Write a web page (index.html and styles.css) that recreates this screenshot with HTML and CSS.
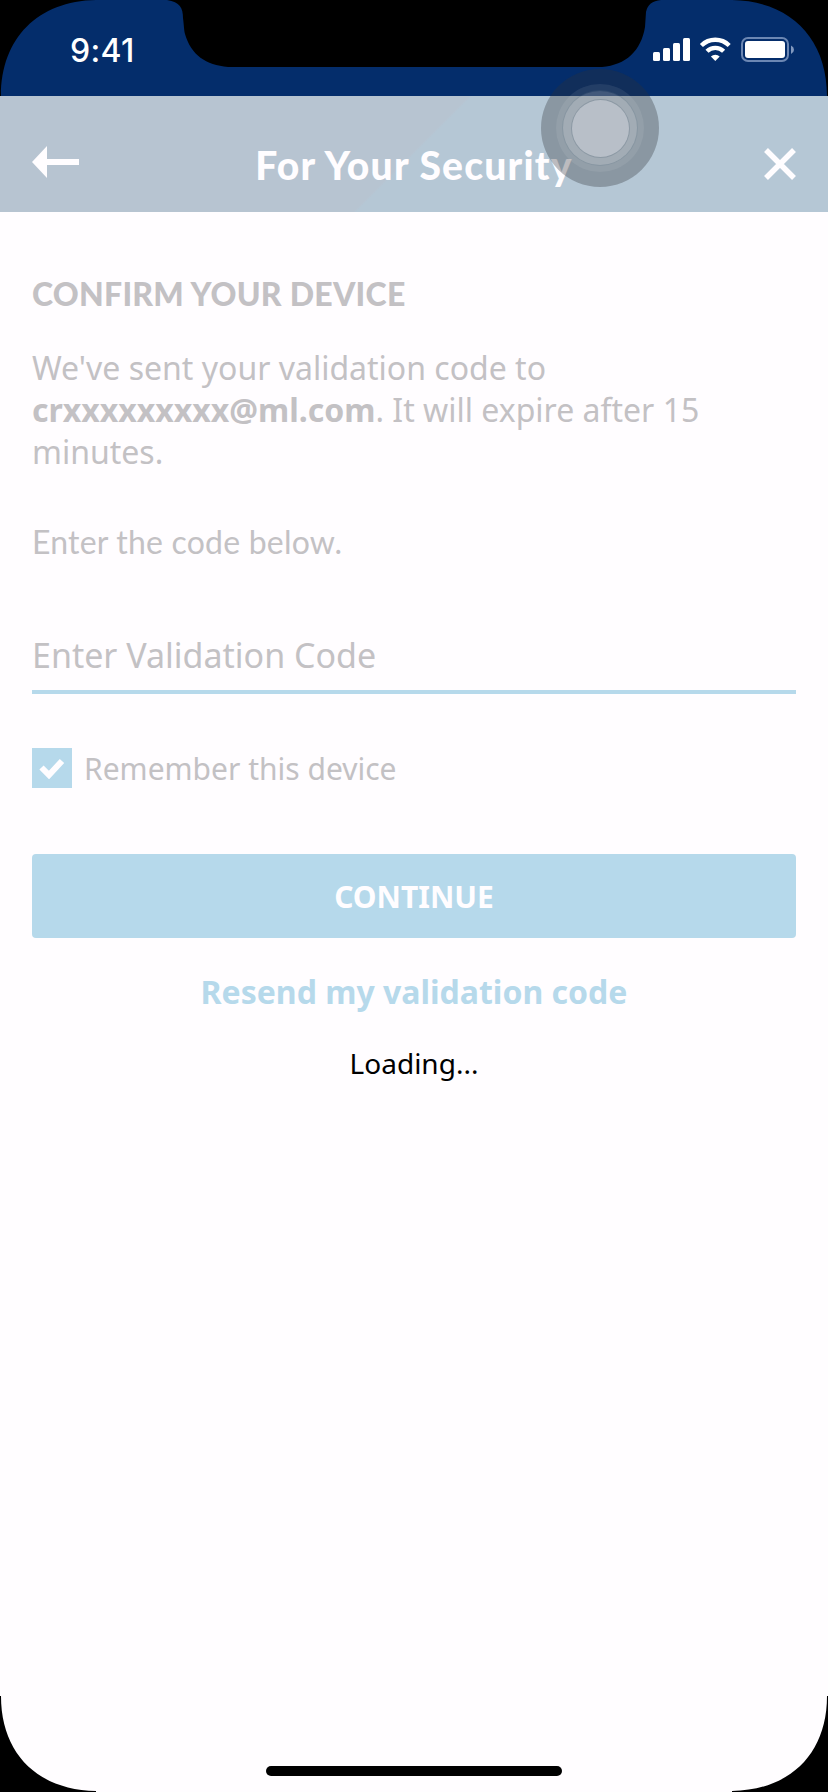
FILE: index.html
```
<!DOCTYPE html>
<html lang="en">
<head>
<meta charset="utf-8">
<title>For Your Security</title>
<link rel="stylesheet" href="styles.css">
</head>
<body>
<div class="phone">
  <div class="status">
    <span class="time">9:41</span>
    <svg class="indicators" width="144" height="26" viewBox="0 0 144 26">
      <g fill="#fff">
        <rect x="1" y="15" width="7" height="9" rx="1.5"/>
        <rect x="11" y="11" width="7" height="13" rx="1.5"/>
        <rect x="21" y="6" width="7" height="18" rx="1.5"/>
        <rect x="31" y="1" width="7" height="23" rx="1.5"/>
        <path d="M63.300 24l-4.400-4.400a6.200 6.200 0 0 1 8.800 0z"/>
      </g>
      <g fill="none" stroke="#fff" stroke-width="4.300">
        <path d="M55 14.300a11.700 11.700 0 0 1 16.600 0"/>
        <path d="M49.400 8.500a19.700 19.700 0 0 1 27.800 0"/>
      </g>
      <rect x="90" y="1" width="46" height="23" rx="6" fill="none" stroke="#6c87b3" stroke-width="2"/>
      <rect x="93" y="4" width="40" height="17" rx="3" fill="#fff"/>
      <path d="M139 8.500q3 1.500 3 4.300t-3 4.300z" fill="#8299bf"/>
    </svg>
  </div>
  <header class="header">
    <svg class="back" width="48" height="32" viewBox="0 0 48 32"><path d="M0 16L15 0v13h32v6H15v13z" fill="#fffdff"/></svg>
    <h1 class="title">For Your Security</h1>
    <svg class="close" width="32" height="32" viewBox="0 0 32 32"><path d="M2 2l28 28M30 2l-28 28" stroke="#fffdff" stroke-width="5.500"/></svg>
  </header>
  <main class="content">
    <h2 class="heading">CONFIRM YOUR DEVICE</h2>
    <p class="message">We've sent your validation code to <b>crxxxxxxxxx@ml.com</b>. It will expire after 15 minutes.</p>
    <p class="hint">Enter the code below.</p>
    <div class="field">Enter Validation Code</div>
    <div class="remember">
      <span class="box"><svg width="26" height="22" viewBox="0 0 26 22"><path d="M2.500 10.500l7.500 7.500L23 4" fill="none" stroke="#fffdff" stroke-width="6"/></svg></span>
      <span class="label">Remember this device</span>
    </div>
    <div class="continue">CONTINUE</div>
    <div class="resend">Resend my validation code</div>
    <div class="loading">Loading...</div>
  </main>
  <div class="home"></div>
  <svg class="frame" width="828" height="1792" viewBox="0 0 828 1792">
    <path d="M0 0H96C38 1 1 38 1 96H0zM828 0H732C790 1 827 38 827 96H828zM0 1792H96V1791C38 1790 1 1754 1 1696H0zM828 1792H732V1791C790 1790 827 1754 827 1696H828z"/>
    <path d="M167 0C180 2 183 8 183 18C184 26 184 30 185 34C191 55 206 65 228 67H602C626 65 641 51 645 27L646 12Q648 1 661 0z"/>
  </svg>
  <div class="touch"><div class="ring-outer"><div class="ring-inner"><div class="core"></div></div></div></div>
</div>
</body>
</html>
```
FILE: styles.css
```
* { box-sizing: border-box; }
body { margin: 0; }
.phone {
  position: relative;
  display: flex;
  flex-direction: column;
  width: 828px;
  height: 1792px;
  overflow: hidden;
  background: #fffdff;
  color: #c3c1c4;
  font-family: "Noto Sans", sans-serif;
}
.status {
  display: flex;
  justify-content: space-between;
  height: 96px;
  padding: 37px 32px 0 70px;
  background: #042d6b;
}
.time {
  padding-top: 1px;
  font: 500 32px/26px Inter, sans-serif;
  letter-spacing: .3px;
  color: #fff;
}
.header {
  display: grid;
  grid-template-columns: 48px 1fr 48px;
  height: 116px;
  padding: 0 32px;
  background: linear-gradient(135deg, #b7c4d1 0 49.700%, #b5c7d5 50%);
}
.back { margin-top: 50px; }
.close { margin-top: 52px; justify-self: end; }
.title {
  margin: 45px 0 0;
  font: 900 39px/48px Lato, sans-serif;
  letter-spacing: 1.200px;
  color: #fffdff;
  text-align: center;
  white-space: nowrap;
}
.content {
  display: flex;
  flex-direction: column;
  flex: 1;
  padding: 62px 32px 0;
}
.heading {
  margin: 0;
  font: 900 32px/40px Lato, sans-serif;
  letter-spacing: .250px;
}
.message {
  margin: 33px 0 0;
  font-size: 32px;
  line-height: 42px;
}
.hint {
  margin: 49px 0 0;
  font: 400 32px/40px Lato, sans-serif;
  letter-spacing: .2px;
}
.field {
  margin-top: 71px;
  padding-bottom: 13px;
  border-bottom: 4px solid #b6d9eb;
  font-size: 34px;
  line-height: 44px;
}
.remember {
  display: flex;
  gap: 12px;
  margin-top: 54px;
  font-size: 30px;
  line-height: 42px;
  height: 40px;
}
.box {
  display: flex;
  justify-content: center;
  align-items: center;
  width: 40px;
  height: 40px;
  background: #b6d9eb;
}
.continue {
  height: 84px;
  margin-top: 66px;
  border-radius: 4px;
  background: #b6d9eb;
  color: #fffdff;
  font-size: 30px;
  font-weight: 700;
  line-height: 86px;
  text-align: center;
}
.resend {
  margin-top: 34px;
  color: #b6d9eb;
  font-size: 32px;
  font-weight: 700;
  line-height: 40px;
  text-align: center;
}
.loading {
  margin-top: 31px;
  color: #000;
  font-size: 28px;
  line-height: 40px;
  text-align: center;
}
.home {
  align-self: center;
  width: 296px;
  height: 10px;
  margin-bottom: 16px;
  border-radius: 5px;
  background: #000;
}
.frame {
  position: absolute;
  inset: 0;
}
.touch {
  position: absolute;
  left: 541px;
  top: 69px;
  display: grid;
  place-items: center;
  width: 118px;
  height: 118px;
  border-radius: 50%;
  background: rgba(48, 50, 56, .32);
}
.ring-outer, .ring-inner, .core {
  display: grid;
  place-items: center;
  border-radius: 50%;
}
.ring-outer {
  width: 88px;
  height: 88px;
  background: rgba(255, 255, 255, .08);
}
.ring-inner {
  width: 74px;
  height: 74px;
  background: rgba(255, 255, 255, .14);
  box-shadow: 0 0 0 1px rgba(90, 115, 135, .2);
}
.core {
  width: 57px;
  height: 57px;
  background: #b8bfc8;
  box-shadow: 0 0 0 1px rgba(90, 110, 125, .3);
}
```
